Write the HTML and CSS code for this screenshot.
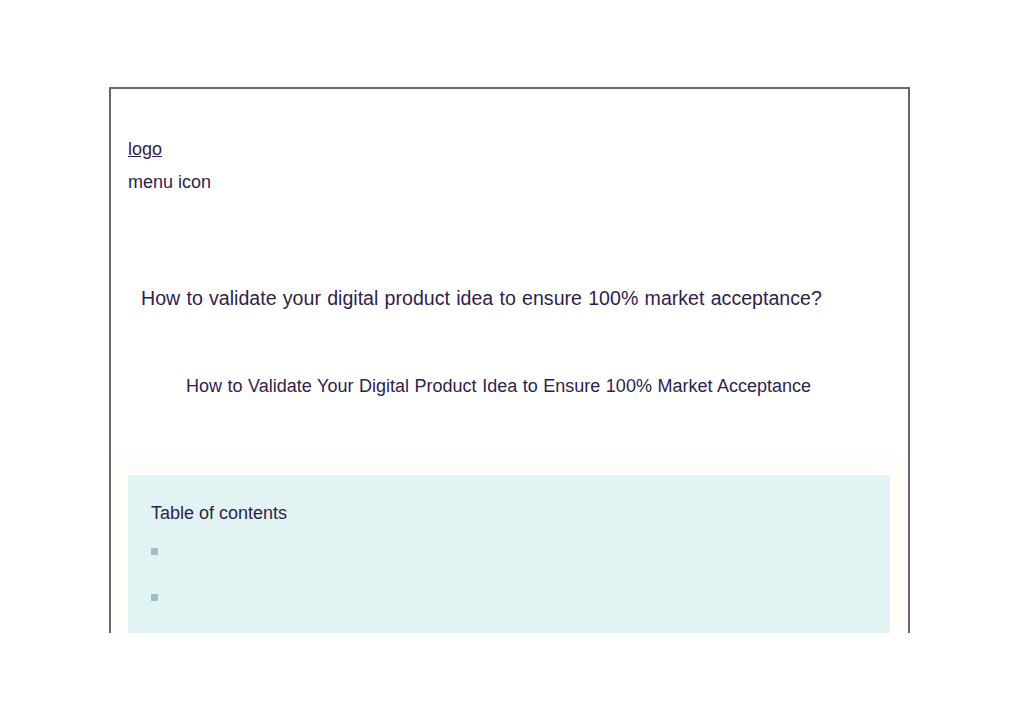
FILE: index.html
```html
<!DOCTYPE html>
<html lang="en">
<head>
<meta charset="utf-8">
<title>How to validate your digital product idea</title>
<link rel="stylesheet" href="styles.css">
</head>
<body>
<div class="frame">
  <header class="site-header">
    <div class="logo"><a href="#">logo</a></div>
    <div class="menu-icon">menu icon</div>
  </header>
  <h1 class="page-title">How to validate your digital product idea to ensure 100% market acceptance?</h1>
  <h2 class="article-title">How to Validate Your Digital Product Idea to Ensure 100% Market Acceptance</h2>
  <section class="content">
    <div class="toc">
      <div class="toc-title">Table of contents</div>
      <ul class="toc-list">
        <li class="toc-item"></li>
        <li class="toc-item"></li>
      </ul>
    </div>
  </section>
</div>
</body>
</html>
```
FILE: styles.css
```css
html, body {
  margin: 0;
  padding: 0;
  background: #ffffff;
}
body {
  font-family: "Liberation Sans", Arial, sans-serif;
  color: #301e4e;
}
.frame {
  margin: 87px 0 0 109px;
  width: 797px;
  height: 544px;
  border: 2px solid #686868;
  border-bottom: none;
  overflow: hidden;
  display: flex;
  flex-direction: column;
}
.site-header {
  padding: 49px 17px 0 17px;
  display: flex;
  flex-direction: column;
  gap: 11px;
  font-size: 18px;
  line-height: 22px;
}
.logo a {
  color: #301e4e;
  text-decoration: underline;
}
.page-title {
  margin: 93px 0 0 0;
  padding-left: 30px;
  font-size: 19.6px;
  line-height: 24px;
  word-spacing: 0.8px;
  font-weight: normal;
}
.article-title {
  margin: 65px 0 0 0;
  padding-left: 75px;
  font-size: 18px;
  line-height: 22px;
  word-spacing: 0.55px;
  font-weight: normal;
}
.content {
  margin-top: 58px;
  flex: 1;
  background: #fffdf9;
  padding: 20px 18px 0 17px;
}
.toc {
  background: #e1f3f3;
  height: 100%;
  padding: 27px 22px 0 23px;
  box-sizing: border-box;
}
.toc-title {
  font-size: 18px;
  line-height: 22px;
}
.toc-list {
  list-style: none;
  margin: 0;
  padding: 0;
  padding-top: 14px;
  display: flex;
  flex-direction: column;
  gap: 20px;
}
.toc-item {
  height: 26px;
  display: flex;
  align-items: center;
}
.toc-item::before {
  content: "";
  width: 7px;
  height: 7px;
  background: #9cbfc0;
}
```
